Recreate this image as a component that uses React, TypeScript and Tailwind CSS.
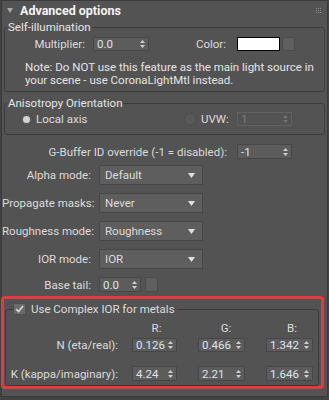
import React from "react";

function Arrows({ dim }: { dim?: boolean }) {
  return (
    <svg width="5" height="8" viewBox="0 0 5 8" className="shrink-0">
      <path d="M2.5 0 L5 3 L0 3 Z M0 5 L5 5 L2.5 8 Z" fill={dim ? "#737373" : "#cfcfcf"} />
    </svg>
  );
}

function Spinner({ value, className, dim }: { value: string; className: string; dim?: boolean }) {
  return (
    <div
      className={
        "flex items-center justify-between pl-[3px] pr-[3px] border rounded-[1px] " +
        (dim ? "border-[#616161] bg-[#535353] text-[#7a7a7a] " : "border-[#474747] bg-[#5c5c5c] text-[#dfe4ea] ") +
        className
      }
    >
      <span className="leading-[12px]">{value}</span>
      <Arrows dim={dim} />
    </div>
  );
}

function Dropdown({ value }: { value: string }) {
  return (
    <div className="w-[104px] h-[20px] flex items-center justify-between pl-[5px] pr-[7px] bg-[#5e5e5e] border border-[#474747] text-[#dcdcdc]">
      <span>{value}</span>
      <svg width="7" height="5" viewBox="0 0 7 5">
        <path d="M0 0 H7 L3.5 5 Z" fill="#e0e0e0" />
      </svg>
    </div>
  );
}

function DropRow({ label, value, first }: { label: string; value: string; first?: boolean }) {
  return (
    <div className={"flex items-center h-[20px] " + (first ? "mt-[6px]" : "mt-[8px]")}>
      <div className="w-[89px] text-right whitespace-nowrap">{label}</div>
      <div className="ml-[8px]">
        <Dropdown value={value} />
      </div>
    </div>
  );
}

export default function App() {
  return (
    <div className="w-[329px] h-[400px] bg-[#424242] font-['Roboto',sans-serif] text-[11.5px] leading-[14px] text-[#dcdcdc] overflow-hidden">
      <div className="ml-[1px] w-[327px] h-[397px] border border-[#3a3a3a] bg-[#535353] flex flex-col">
        {/* header */}
        <div className="h-[19px] flex items-center">
          <svg width="6" height="5" viewBox="0 0 6 5" className="ml-[5px]">
            <path d="M0 0 H6 L3 5 Z" fill="#a8a8a8" />
          </svg>
          <span className="ml-[7px] font-bold text-[#f4f4f4] text-[12.5px]">Advanced options</span>
          <div className="ml-auto mr-[6px] grid grid-cols-3 gap-[1px]">
            {Array.from({ length: 9 }).map((_, i) => (
              <div key={i} className="w-[1px] h-[1px] bg-[#8a8a8a]" />
            ))}
          </div>
        </div>

        {/* Self-illumination */}
        <fieldset className="mx-[2px] border border-[#3c3c3c] rounded-[3px] pb-[4px]">
          <legend className="ml-[2px] px-[1px] leading-[14px] text-[#e6e6e6]">Self-illumination</legend>
          <div className="mt-[3px] h-[14px] flex items-center">
            <div className="w-[80px] text-right">Multiplier:</div>
            <Spinner value="0.0" className="ml-[8px] w-[56px] h-[14px]" />
            <div className="w-[77px] text-right">Color:</div>
            <div className="ml-[11px] w-[43px] h-[14px] bg-white border border-black" />
            <div className="ml-[2px] w-[13px] h-[14px] bg-[#5f5f5f] border border-[#4b4b4b] rounded-[2px]" />
          </div>
          <div className="mt-[10px] pl-[20px] leading-[13px] whitespace-nowrap text-[#e4e4e4]">
            <div>Note: Do NOT use this feature as the main light source in</div>
            <div>your scene - use CoronaLightMtl instead.</div>
          </div>
        </fieldset>

        {/* Anisotropy */}
        <fieldset className="mt-[4px] mx-[2px] border border-[#3c3c3c] rounded-[3px] pb-[8px]">
          <legend className="ml-[2px] px-[1px] leading-[14px] text-[#e6e6e6]">Anisotropy Orientation</legend>
          <div className="mt-[2px] h-[14px] flex items-center">
            <div className="w-[179px] flex items-center">
              <div className="ml-[15px] w-[13px] h-[13px] rounded-full bg-[#5a5a5a] border border-[#4a4a4a] flex items-center justify-center">
                <div className="w-[7px] h-[7px] rounded-full bg-[#d4d4d4]" />
              </div>
              <span className="ml-[3px]">Local axis</span>
            </div>
            <div className="w-[13px] h-[13px] rounded-full bg-[#585858] border border-[#4c4c4c]" />
            <span className="w-[36px] pl-[4px]">UVW:</span>
            <Spinner value="1" dim className="ml-[4px] w-[55px] h-[14px]" />
          </div>
        </fieldset>

        {/* G-Buffer */}
        <div className="mt-[9px] h-[15px] flex items-center">
          <div className="w-[225px] text-right whitespace-nowrap">G-Buffer ID override (-1 = disabled):</div>
          <Spinner value="-1" className="ml-[10px] w-[55px] h-[15px]" />
        </div>

        <DropRow label="Alpha mode:" value="Default" first />
        <DropRow label="Propagate masks:" value="Never" />
        <DropRow label="Roughness mode:" value="Roughness" />
        <DropRow label="IOR mode:" value="IOR" />

        <div className="mt-[8px] h-[15px] flex items-center">
          <div className="w-[89px] text-right">Base tail:</div>
          <Spinner value="0.0" className="ml-[8px] w-[42px] h-[15px]" />
          <div className="ml-[4px] w-[13px] h-[15px] bg-[#5f5f5f] border border-[#4b4b4b] rounded-[2px]" />
        </div>

        {/* Complex IOR */}
        <div className="mt-[4px] -ml-[1px] w-[323px] h-[93px] border-[3px] border-[#e8383d] rounded-[4px]">
          <fieldset className="ml-[1px] w-[314px] mt-[3px] border border-[#3c3c3c] rounded-[3px] pb-[4px]">
            <legend className="ml-[7px] pr-[2px] h-[14px] flex items-center">
              <div className="w-[13px] h-[12px] bg-[#6a6a6a] border border-[#4e4e4e] flex items-center justify-center">
                <svg width="9" height="8" viewBox="0 0 9 8">
                  <path d="M1 4 L3.5 6.5 L8 1" stroke="#dcdcdc" strokeWidth="1.6" fill="none" />
                </svg>
              </div>
              <span className="ml-[5px]">Use Complex IOR for metals</span>
            </legend>
            <div className="mt-[5px] h-[14px] flex items-center">
              <div className="w-[112px]" />
              <div className="ml-[14px] w-[45px] pl-[4px] text-center">R:</div>
              <div className="ml-[21px] w-[47px] pl-[9px] text-center">G:</div>
              <div className="ml-[21px] w-[47px] pl-[5px] text-center">B:</div>
            </div>
            <div className="mt-[3px] h-[14px] flex items-center">
              <div className="w-[112px] text-right whitespace-nowrap">N (eta/real):</div>
              <Spinner value="0.126" className="ml-[14px] w-[45px] h-[14px]" />
              <Spinner value="0.466" className="ml-[21px] w-[47px] h-[14px]" />
              <Spinner value="1.342" className="ml-[21px] w-[47px] h-[14px]" />
            </div>
            <div className="mt-[14px] h-[15px] flex items-center">
              <div className="w-[112px] text-right whitespace-nowrap">K (kappa/imaginary):</div>
              <Spinner value="4.24" className="ml-[14px] w-[45px] h-[15px]" />
              <Spinner value="2.21" className="ml-[21px] w-[47px] h-[15px]" />
              <Spinner value="1.646" className="ml-[21px] w-[47px] h-[15px]" />
            </div>
          </fieldset>
        </div>
      </div>
    </div>
  );
}
